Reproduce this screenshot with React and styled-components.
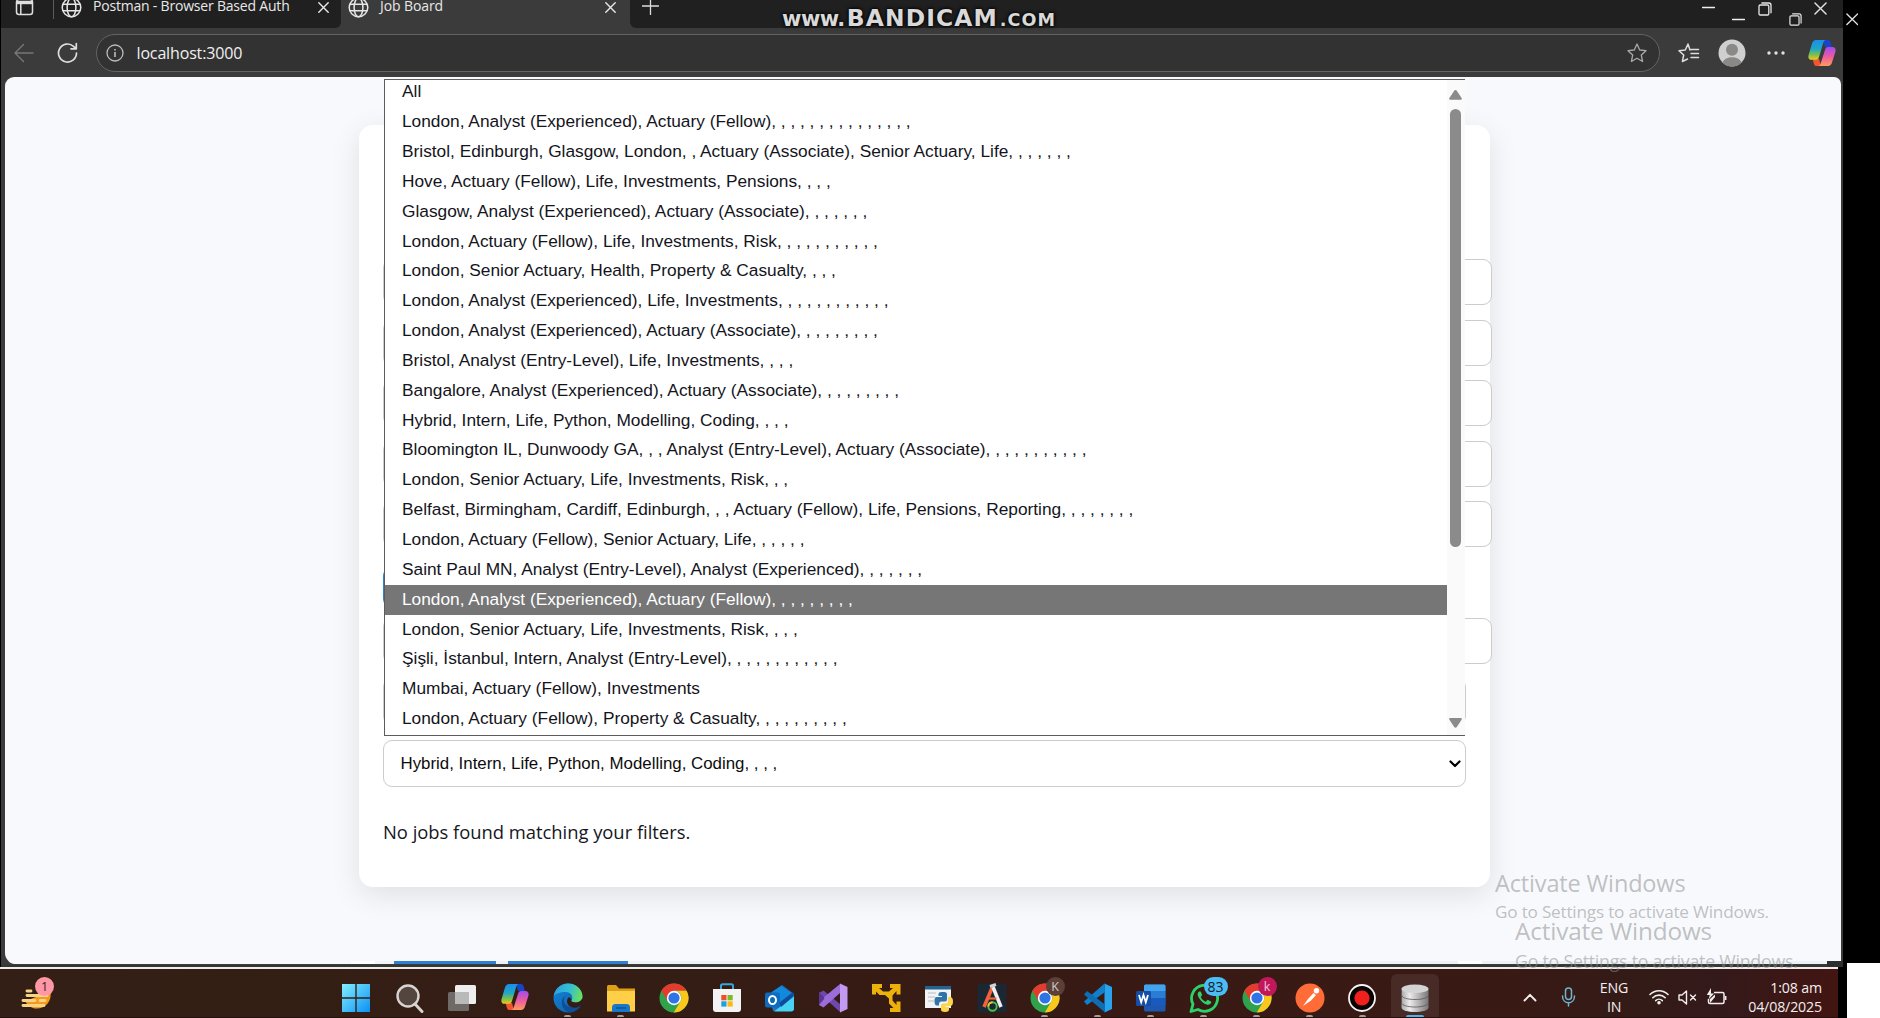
import React from "react";
import styled, { createGlobalStyle } from "styled-components";

const ui = `"Open Sans", "Noto Sans", sans-serif`;
const arial = `"Liberation Sans", Arial, sans-serif`;

const Global = createGlobalStyle`
  * { box-sizing: border-box; }
  body { margin: 0; background: #000; overflow: hidden; }
  svg { display: block; flex: none; }
`;

/* ---------- shell ---------- */
const Screen = styled.div`
  position: relative;
  width: 1880px;
  height: 1018px;
  background: #000;
  overflow: hidden;
  display: flex;
  flex-direction: column;
  font-family: ${ui};
`;
const Browser = styled.div`
  width: 1843px;
  height: 967px;
  border-left: 1px solid #000;
  background: #3b3b3b;
  display: flex;
  flex-direction: column;
`;
const TabStrip = styled.div`
  height: 28px;
  display: flex;
  background: #3b3b3b;
  color: #e8e8e8;
`;
const StripStart = styled.div`
  width: 340px;
  background: #202020;
  border-bottom-right-radius: 6px;
  display: flex;
  align-items: center;
  padding: 0 12px 13px 14px;
`;
const StripDivider = styled.div`
  width: 1px;
  height: 22px;
  margin: 0 7px 0 19px;
  background: #5c5c5c;
`;
const ActiveTab = styled.div`
  width: 289px;
  display: flex;
  align-items: center;
  padding: 0 14px 13px 7px;
`;
const TabTitle = styled.span`
  flex: 1;
  margin: -3px 0 0 11px;
  font-size: 14px;
  line-height: 18px;
  letter-spacing: ${(p) => p.$track || "0"};
  white-space: nowrap;
`;
const StripEnd = styled.div`
  flex: 1;
  background: #202020;
  border-bottom-left-radius: 6px;
  padding: 0 0 0 12px;
  display: flex;
`;
const Toolbar = styled.div`
  height: 49px;
  display: flex;
  align-items: center;
  padding: 1px 7px 0 13px;
  color: #d6d6d6;
`;
const AddressBar = styled.div`
  width: 1564px;
  height: 38px;
  margin: 0 0 0 18px;
  border: 1px solid #636363;
  border-radius: 19px;
  background: #323232;
  display: flex;
  align-items: center;
  padding: 0 12px 0 9px;
`;
const Url = styled.span`
  flex: 1;
  margin-left: 12.5px;
  margin-top: -1px;
  color: #f0f0f0;
  font-size: 16px;
  letter-spacing: -0.15px;
`;
const ToolGroup = styled.div`
  flex: 1;
  display: flex;
  align-items: center;
  padding: 0 0 0 18px;
`;

/* ---------- page ---------- */
const Viewport = styled.div`
  position: relative;
  width: 1836px;
  height: 887px;
  margin-left: 4px;
  border-radius: 9px 7px 0 11px;
  background: #f8f9fc;
  overflow: hidden;
  display: flex;
  flex-direction: column;
  justify-content: space-between;
`;
const Card = styled.div`
  width: 1131px;
  height: 762px;
  margin: 48px 0 0 354px;
  padding: 134px 24px 0;
  border-radius: 14px;
  background: #fff;
  box-shadow: 0 8px 30px rgba(0, 0, 0, 0.1);
`;
const Fields = styled.div`
  display: flex;
  flex-direction: column;
  gap: 14.6px;
`;
const Field = styled.div`
  width: 1109px;
  height: 46px;
  border: 1px solid #ccc;
  border-radius: 9px;
  background: #fff;
`;
const Submit = styled.div`
  width: 180px;
  height: 41px;
  margin: 5px 0 -5px;
  border-radius: 9px;
  background: #2b86c9;
`;
const Select = styled.div`
  position: relative;
  width: 1083px;
  height: 47px;
  border: 1px solid #ccc;
  border-radius: 9px;
  background: #fff;
  display: flex;
  align-items: center;
  justify-content: space-between;
  padding: 1px 4px 0 16.5px;
  color: #0c0c0c;
  font-family: ${arial};
  font-size: 16.87px;
`;
const Menu = styled.div`
  position: absolute;
  left: 0;
  bottom: calc(100% + 5px);
  width: 1080.5px;
  height: 657px;
  border: solid #5c5c5c;
  border-width: 1px 0 1px 1px;
  background: #fff;
  display: flex;
`;
const Options = styled.div`
  flex: 1;
  overflow: hidden;
  & > :first-child { margin-top: -2.4px; }
`;
const Option = styled.div`
  height: 29.857px;
  padding-left: 17px;
  line-height: 29.857px;
  font-size: 17.31px;
  white-space: pre;
  color: ${(p) => (p.$active ? "#fff" : "#14141c")};
  background: ${(p) => (p.$active ? "#767676" : "transparent")};
`;
const Scrollbar = styled.div`
  width: 18px;
  background: #fafafa;
  display: flex;
  flex-direction: column;
  justify-content: space-between;
  align-items: center;
  padding: 10px 0 7px;
`;
const Thumb = styled.div`
  width: 11px;
  height: 438px;
  margin: 9px 0 auto;
  border-radius: 6px;
  background: #8b8b8b;
`;
const Empty = styled.p`
  margin: 30px 0 0;
  font-size: 18.4px;
  line-height: 30px;
  letter-spacing: -0.02px;
  color: #16161e;
`;
const NextWindow = styled.div`
  height: 3px;
  padding-left: 346px;
  background: linear-gradient(90deg, #f8fafc 330px, #edf1f5 420px);
  display: flex;
`;
const Slice = styled.div`
  width: ${(p) => p.$w}px;
  margin-right: ${(p) => p.$gap}px;
  background: ${(p) => p.$c};
`;
const EdgeLine = styled.div`
  height: 2px;
  margin-top: auto;
  background: #343734;
`;
const PaleLine = styled.div`
  height: 2px;
  width: 1838px;
  background: #f1edeb;
`;

/* ---------- overlays ---------- */
const Floating = styled.div`
  position: absolute;
  left: ${(p) => p.$x}px;
  top: ${(p) => p.$y}px;
  white-space: nowrap;
`;
const WindowGlyph = styled(Floating)`
  color: #e2e2e2;
`;
const Watermark = styled.div`
  color: rgba(140, 142, 144, 0.55);
  line-height: ${(p) => p.$lh || 32}px;
  font-size: ${(p) => p.$size}px;
  letter-spacing: ${(p) => p.$track}px;
`;
const Bandicam = styled.div`
  display: flex;
  align-items: baseline;
  gap: 2px;
  font-family: "DejaVu Sans", sans-serif;
  font-weight: 700;
  color: #d9d9d9;
  line-height: 28px;
  text-shadow: 0 0 3px #000, 0 0 4px #000;
`;
const Mark = styled.span`
  font-size: ${(p) => p.$size}px;
  letter-spacing: ${(p) => p.$track}px;
`;

/* ---------- taskbar ---------- */
const Bottom = styled.div`
  height: 49px;
  display: flex;
`;
const Taskbar = styled.div`
  width: 1838px;
  display: flex;
  background: linear-gradient(90deg, #331f15 0, #341d14 700px, #381a15 1000px, #391914 1500px, #331b18 1650px, #34191a 1720px, #421512 1838px);
  color: #f3eeee;
  border-bottom: 1px solid #26100f;
`;
const Widgets = styled.div`
  width: 329.6px;
  padding: 7px 0 0 20px;
`;
const WidgetIcon = styled.div`
  position: relative;
  width: 34px;
`;
const Apps = styled.div`
  display: flex;
  padding-top: 5px;
`;
const AppCell = styled.div`
  width: 52.98px;
  display: flex;
  flex-direction: column;
  align-items: center;
  justify-content: space-between;
  padding-top: 9px;
`;
const Highlight = styled(AppCell)`
  width: 48px;
  margin-left: 2.5px;
  border-radius: 6px 6px 0 0;
  background: rgba(255, 255, 255, 0.08);
`;
const Indicator = styled.div`
  width: ${(p) => (p.$active ? 18 : 7)}px;
  height: 2px;
  border-radius: 2px 2px 0 0;
  background: ${(p) => (p.$active ? "#4cb4e8" : "#a89c98")};
`;
const Holder = styled.div`
  position: relative;
`;
const Badge = styled.span`
  position: absolute;
  right: ${(p) => p.$right ?? -5}px;
  top: ${(p) => p.$top ?? -6}px;
  min-width: 19px;
  height: 19px;
  padding: 0 ${(p) => (p.$wide ? 4 : 0)}px;
  border-radius: 10px;
  text-align: center;
  line-height: 19px;
  font-size: ${(p) => (p.$wide ? 14 : 12.5)}px;
  color: ${(p) => p.$fg || "#fff"};
  background: ${(p) => p.$bg};
`;
const Tray = styled.div`
  margin-left: auto;
  display: flex;
  align-items: center;
  padding: 8px 16px 0 0;
`;
const TrayText = styled.div`
  margin-top: -1px;
  width: ${(p) => p.$w}px;
  text-align: ${(p) => p.$align};
  font-size: 14.2px;
  line-height: 19px;
  letter-spacing: ${(p) => p.$track || 0}px;
`;
const TrayGap = styled.div`
  width: ${(p) => p.$w}px;
`;
const Blank = styled.div`
  position: absolute;
  left: 1847px;
  top: 963px;
  width: 33px;
  height: 55px;
  background: #fff;
`;
const Notch = styled.div`
  position: absolute;
  left: 1827px;
  top: 961px;
  width: 16px;
  height: 6px;
  background: #2c2f30;
`;

/* ---------- drawings ---------- */
const Line = ({ w, h, d, sw = 1.4, vb, color = "currentColor", ...r }) => (
  <svg width={w} height={h} viewBox={vb || `0 0 ${w} ${h}`} fill="none" stroke={color} strokeWidth={sw} strokeLinecap="round" strokeLinejoin="round" {...r}>
    <path d={d} />
  </svg>
);
const Globe = () => (
  <svg width="21" height="21" viewBox="0 0 21 21" fill="none" stroke="#e6e6e6" strokeWidth="1.5">
    <circle cx="10.5" cy="10.5" r="9.3" />
    <ellipse cx="10.5" cy="10.5" rx="4.4" ry="9.3" />
    <path d="M2 7.2h17M2 13.8h17" />
  </svg>
);
const TabsIcon = () => (
  <svg width="19" height="17" viewBox="0 0 19 17" fill="none" stroke="#dedede" strokeWidth="1.5">
    <rect x="1.5" y="0.5" width="16" height="15" rx="2.5" />
    <path d="M1.5 3.6h16" strokeWidth="3.2" />
    <path d="M5.8 4v11.5" />
  </svg>
);
const Cross = ({ s = 11, sw = 1.4 }) => <Line w={s} h={s} vb="0 0 11 11" sw={sw} d="M.8.8l9.4 9.4M10.2.8L.8 10.2" />;
const Restore = ({ s = 14 }) => (
  <svg width={s} height={s} viewBox="0 0 14 14" fill="none" stroke="#e6e6e6" strokeWidth="1.3">
    <rect x="1" y="3" width="9.8" height="10" rx="1.2" />
    <path d="M3.4 1h7.4a2.2 2.2 0 0 1 2.2 2.2v8" />
  </svg>
);
const Minus = () => <Line w={13} h={3} sw={1.5} d="M.5 1.5h12" color="#eee" />;

const CopilotIcon = ({ s = 28 }) => (
  <svg width={s} height={s} viewBox="0 0 28 28">
    <defs>
      <linearGradient id="cpA" x1="0" y1="0" x2="0" y2="1">
        <stop offset="0" stopColor="#1a8fe8" /><stop offset=".45" stopColor="#1fa7c8" /><stop offset=".75" stopColor="#7cc04a" /><stop offset="1" stopColor="#f1c81e" />
      </linearGradient>
      <linearGradient id="cpB" x1="0" y1="0" x2="0" y2="1">
        <stop offset="0" stopColor="#a14cf0" /><stop offset=".5" stopColor="#ec5aa0" /><stop offset="1" stopColor="#ff9a5c" />
      </linearGradient>
    </defs>
    <path d="M15 1h5c1.5 0 2.2 1 2.7 2.600L23.700 8H17z" fill="#1745c8" />
    <path d="M13 27H8.500c-1.500 0-2.200-1-2.700-2.600L4.600 20H11z" fill="#f0552e" />
    <path d="M8 1h10c-1.600.2-2.300 1.500-2.800 3L11 18c-.6 1.800-1.400 2.800-3 2.800H3.600C.7 20.800-.1 18.600.6 16L4 4.500C4.700 2.200 6 1 8 1z" fill="url(#cpA)" />
    <path d="M20 27H10c1.600-.2 2.300-1.500 2.800-3L17 11c.6-1.900 1.400-3 3-3h4.400c2.900 0 3.700 2.200 3 4.800L24 23.500c-.7 2.300-2 3.500-4 3.500z" fill="url(#cpB)" />
  </svg>
);
const Chrome = () => (
  <svg width="30" height="30" viewBox="0 0 30 30">
    <circle cx="15" cy="15" r="14.500" fill="#2fa24c" />
    <path d="M2.440 7.750A14.500 14.500 0 0 1 27.560 7.750H15L8.720 18.600z" fill="#e33b2e" />
    <path d="M27.560 7.750A14.500 14.500 0 0 1 14.800 29.500L21.300 18.600A7.200 7.200 0 0 0 15 7.750z" fill="#fbc71b" />
    <circle cx="15" cy="15" r="7.200" fill="#fff" />
    <circle cx="15" cy="15" r="5.600" fill="#2f74e6" />
  </svg>
);
const svg = (children, vb = "0 0 30 30") => <svg width="30" height="30" viewBox={vb}>{children}</svg>;

const Windows = svg(<>
  <defs><linearGradient id="wn" x1="0" y1="0" x2="1" y2="1"><stop offset="0" stopColor="#84efff" /><stop offset="1" stopColor="#0a90f5" /></linearGradient></defs>
  <path fill="url(#wn)" d="M1 1h13.300v13.300H1zM15.700 1H29v13.300H15.700zM1 15.700h13.300V29H1zM15.700 15.700H29V29H15.700z" />
</>);
const Search = svg(<>
  <circle cx="14" cy="13" r="10.500" fill="#54463f" stroke="#d8d4d2" strokeWidth="2.400" />
  <path d="M21 21l7 7.500" stroke="#d8d4d2" strokeWidth="3" strokeLinecap="round" />
</>);
const TaskView = svg(<>
  <rect x="1" y="9" width="21" height="19" rx="1.500" fill="#6f6a68" />
  <rect x="8" y="2" width="21" height="19" rx="1.500" fill="#eee" />
  <rect x="8" y="9" width="14" height="12" fill="#b9b9b9" />
</>);
const Edge = svg(<>
  <defs>
    <linearGradient id="egA" x1="0" y1=".3" x2="1" y2=".5"><stop offset="0" stopColor="#2a9fe0" /><stop offset=".55" stopColor="#35bfd0" /><stop offset="1" stopColor="#6be05a" /></linearGradient>
    <linearGradient id="egB" x1="0" y1="0" x2="1" y2="1"><stop offset="0" stopColor="#1685d8" /><stop offset="1" stopColor="#0c5ba8" /></linearGradient>
  </defs>
  <circle cx="15" cy="15" r="14.500" fill="url(#egB)" />
  <path d="M.7 13C2 5.500 8 .5 15 .5 23.500.5 29.500 7 29.500 13c0 4-3 6.500-6.800 6.500-3 0-5-1-4.200-2.400 2.200-3.300-.2-8.100-6-8.100C7 9 2.500 11 .7 13z" fill="url(#egA)" />
  <path d="M12.700 12.500c-3.700 3.700-2 11.500 6.500 11.800 3.300.1 6.300-1.300 8-2.700l.8.800c-2.300 4-6 6.400-10 7C9 29 5.500 17 12.700 12.500z" fill="#0e4f96" />
  <path d="M18.500 17.100c-1 1.500 1.300 2.500 4.200 2.400 2.500-.1 4.800-1.100 6-3l1.300-.5v6l-2.800.8c-2.500 2-6.500 2.500-9.500 1-4.200-2.100-4.700-7.300-2-9.600 1.600.2 3.100 1.500 2.800 2.900z" fill="#341d14" />
</>);
const Folder = svg(<>
  <path d="M1 3.500Q1 2 2.500 2H10l3 3.500H29V28H1z" fill="#dca018" />
  <path d="M1 8h28v20.500H1z" fill="#ffcf48" />
  <path d="M6 29v-4.500Q6 21 9.500 21h11q3.500 0 3.500 3.500V29z" fill="#1877c9" />
  <path d="M10 25h10" stroke="#0d559b" strokeWidth="1.600" />
</>);
const Store = svg(<>
  <path d="M9 7V3Q9 1.300 10.500 1.300h9Q21 1.300 21 3V7" fill="none" stroke="#35a9dc" strokeWidth="2" />
  <path d="M1 6h28V26q0 3-3 3H4q-3 0-3-3z" fill="#f3f3f3" />
  <path d="M9.300 12h5.200v5.300H9.300z" fill="#f04e23" /><path d="M15.500 12h5.200v5.300h-5.200z" fill="#7db928" />
  <path d="M9.300 18.300h5.200v5.300H9.300z" fill="#1da0e2" /><path d="M15.500 18.300h5.200v5.300h-5.200z" fill="#fdb813" />
</>);
const Outlook = svg(<>
  <path d="M4 11L17 2l12 9v14q0 3-3 3H8z" fill="#1c72c4" />
  <path d="M29 12v13.500q0 3-3 3H9L28 14z" fill="#46d3f4" />
  <path d="M7 9l9-6 13 9-12 10z" fill="#1189dc" /><path d="M28 9l1 4-13 11-2-4z" fill="#124b9c" />
  <rect y="9.500" width="15" height="15" rx="2" fill="#0d6cc0" />
  <ellipse cx="7.500" cy="17" rx="3.500" ry="4.100" fill="none" stroke="#fff" strokeWidth="2" />
</>);
const VS = svg(<>
  <path d="M1 10L5.500 7.500 22 21V29z" fill="#7047ad" />
  <path d="M1 9v13l4.500 2.500L22 10V1L5 15z" fill="#9c6bdc" />
  <path d="M1 9v13l5.500-6.500z" fill="#593692" />
  <path d="M22 .5l7.500 3.500v22L22 29.500z" fill="#c29af2" />
</>);
const Arrows = svg(
  <path fill="#edb10c" d="M1 1h10v4H8l4 3.500h6L22 5h-3V1h10.500v10.500h-4V8l-4 4.500v5L25.500 22v-3.500h4V29H19v-4h3.500L18 20.500v-5L14 12H8.500L5 8.500v3H1z" />
);
const Python = svg(<>
  <path d="M1 3h26v22H1z" fill="#f1f3f5" /><path d="M1 3h26v3.500H1z" fill="#24638e" />
  <path d="M4 10h8M4 14h7M4 18h6" stroke="#b7bdc3" strokeWidth="1.200" />
  <path d="M14.500 11q0-2 3-2h3q2.500 0 2.500 2.500v5q0 2-2 2h-4q-2 0-2 2.500v1.500h-2q-2.500 0-2.500-4.500t2.500-4h5v-1h-3.500z" fill="#3374a8" />
  <path d="M24 14h2q3 0 3 4.500t-3 4.500h-4.500v1H25v2.500q0 2.500-4 2.500t-4-2.500V22.500q0-2 2-2h3q2 0 2-2z" fill="#fdd549" />
</>);
const AppA = svg(<>
  <rect x=".5" y=".5" width="29" height="29" rx="2" fill="#1b2733" />
  <path d="M7 24L15 5" stroke="#f2633c" strokeWidth="3.600" /><path d="M16 4l8 20" stroke="#f0f0f0" strokeWidth="3.600" />
  <path d="M10.500 15.500h9" stroke="#f2633c" strokeWidth="2.200" /><path d="M13 3.500L19 1.500" stroke="#d5d5d5" strokeWidth="3" />
  <circle cx="15.500" cy="23.500" r="4.200" fill="#1b2733" stroke="#4bc24b" strokeWidth="1.900" />
  <path d="M11.300 23.500a4.200 4.200 0 0 1 4.200-4.200" stroke="#f5c22b" strokeWidth="1.900" fill="none" />
</>);
const Code = svg(<>
  <path d="M21.500.5L29 4v22l-7.500 3.500z" fill="#2aa3ee" />
  <path d="M21.500.5L1 18.500 4 22 22 9z" fill="#1180cc" />
  <path d="M1 11.500L4 8l18 13.500v8z" fill="#0c6eb5" />
</>);
const Word = svg(<>
  <rect x="8" y="1.500" width="21.500" height="27" rx="1.500" fill="#1d57b0" />
  <path d="M8 3q0-1.500 1.500-1.500H28q1.500 0 1.500 1.500v5H8z" fill="#42a3ef" />
  <path d="M8 8h21.500v7H8z" fill="#2b7cd3" /><path d="M8 15h21.500v7H8z" fill="#185abd" />
  <rect x="0" y="8" width="15" height="15" rx="1.500" fill="#174ea5" />
  <path d="M3 12l2.200 7.200L7.500 12l2.300 7.200L12 12" fill="none" stroke="#fff" strokeWidth="1.800" />
</>);
const WhatsApp = svg(<>
  <path d="M2 28.500l2-7.300A13 13 0 1 1 9 26.500z" fill="none" stroke="#2bd366" strokeWidth="2.800" strokeLinejoin="round" />
  <path d="M10 8.500c-2 1.500-1.500 4 0 6.500 2.300 3.800 5 6 8.500 6.800 2 .3 4-1.500 3.800-3l-3.600-2.100-2 2c-2.500-1-4-2.600-5-4.700l1.500-1.900-1.500-3.600z" fill="#2bd366" />
</>);
const Postman = svg(<>
  <circle cx="15" cy="15" r="14.500" fill="#ff6c37" />
  <circle cx="21.500" cy="7.800" r="2.700" fill="#fff" />
  <path d="M18.500 10l2.500 2-5 5.500L8 23l5-7z" fill="#fff" />
</>);
const Recorder = svg(<>
  <circle cx="15" cy="15" r="13" fill="#0a0303" stroke="#f3f3f3" strokeWidth="1.800" />
  <circle cx="15" cy="15" r="7.600" fill="#f2201d" />
</>);
const Database = svg(<>
  <defs><linearGradient id="db" x1="0" x2="1"><stop offset="0" stopColor="#a9a9a9" /><stop offset=".3" stopColor="#ececec" /><stop offset="1" stopColor="#777" /></linearGradient></defs>
  <path d="M1.500 20.500v4c0 6 27 6 27 0v-4z" fill="url(#db)" />
  <path d="M1.500 19.500c0 6 27 6 27 0v-6h-27z" fill="url(#db)" stroke="#5e5452" strokeWidth=".8" />
  <path d="M1.500 12c0 6 27 6 27 0V6h-27z" fill="url(#db)" stroke="#5e5452" strokeWidth=".8" />
  <ellipse cx="15" cy="5.800" rx="13.500" ry="4.300" fill="#d4d4d4" />
</>);

const apps = [
  { icon: Windows }, { icon: Search }, { icon: TaskView }, { icon: <CopilotIcon /> },
  { icon: Edge, on: true }, { icon: Folder, on: true }, { icon: <Chrome /> }, { icon: Store },
  { icon: Outlook }, { icon: VS }, { icon: Arrows }, { icon: Python }, { icon: AppA },
  { icon: <Chrome />, on: true, badge: "K", bg: "#5a4038", fg: "#d8c8c2" },
  { icon: Code, on: true }, { icon: Word, on: true },
  { icon: WhatsApp, on: true, badge: "83", bg: "#4cbcf5", fg: "#10202c", wide: true },
  { icon: <Chrome />, on: true, badge: "k", bg: "#c2185b", fg: "#f0c4d6" },
  { icon: Postman, on: true }, { icon: Recorder, on: true },
];

const tail = (n) => " ,".repeat(n);
const options = [
  "All",
  "London, Analyst (Experienced), Actuary (Fellow)," + tail(14),
  "Bristol, Edinburgh, Glasgow, London, , Actuary (Associate), Senior Actuary, Life," + tail(6),
  "Hove, Actuary (Fellow), Life, Investments, Pensions," + tail(3),
  "Glasgow, Analyst (Experienced), Actuary (Associate)," + tail(6),
  "London, Actuary (Fellow), Life, Investments, Risk," + tail(10),
  "London, Senior Actuary, Health, Property & Casualty," + tail(3),
  "London, Analyst (Experienced), Life, Investments," + tail(11),
  "London, Analyst (Experienced), Actuary (Associate)," + tail(8),
  "Bristol, Analyst (Entry-Level), Life, Investments," + tail(3),
  "Bangalore, Analyst (Experienced), Actuary (Associate)," + tail(8),
  "Hybrid, Intern, Life, Python, Modelling, Coding," + tail(3),
  "Bloomington IL, Dunwoody GA, , , Analyst (Entry-Level), Actuary (Associate)," + tail(10),
  "London, Senior Actuary, Life, Investments, Risk," + tail(2),
  "Belfast, Birmingham, Cardiff, Edinburgh, , , Actuary (Fellow), Life, Pensions, Reporting," + tail(7),
  "London, Actuary (Fellow), Senior Actuary, Life," + tail(5),
  "Saint Paul MN, Analyst (Entry-Level), Analyst (Experienced)," + tail(6),
  "London, Analyst (Experienced), Actuary (Fellow)," + tail(8),
  "London, Senior Actuary, Life, Investments, Risk," + tail(3),
  "Şişli, İstanbul, Intern, Analyst (Entry-Level)," + tail(11),
  "Mumbai, Actuary (Fellow), Investments",
  "London, Actuary (Fellow), Property & Casualty," + tail(9),
];

function Chromebar() {
  return (
    <>
      <TabStrip>
        <StripStart>
          <TabsIcon />
          <StripDivider />
          <Globe />
          <TabTitle $track="-0.2px">Postman - Browser Based Auth</TabTitle>
          <Cross />
        </StripStart>
        <ActiveTab>
          <Globe />
          <TabTitle $track="-0.1px">Job Board</TabTitle>
          <Cross />
        </ActiveTab>
        <StripEnd><Line w={17} h={15} d="M.5 6h16M8.500 0v14.500" sw={1.3} color="#ddd" /></StripEnd>
      </TabStrip>
      <Toolbar>
        <Line w={20} h={20} d="M19 10H1.500M9.500 1.500L1 10l8.500 8.500" color="#777" />
        <TrayGap $w={23} />
        <Line w={21} h={22} sw={1.7} d="M19.500 11a9 9 0 1 1-3-6.700L19 6.500M19.300 1.500v5.300h-5.300" color="#dedede" />
        <AddressBar>
          <svg width="18" height="18" viewBox="0 0 18 18" fill="none" stroke="#bcbcbc" strokeWidth="1.3"><circle cx="9" cy="9" r="8" /><path d="M9 8v5M9 5v1.500" strokeWidth="1.6" /></svg>
          <Url>localhost:3000</Url>
          <Line w={20} h={20} sw={1.3} color="#a9a9a9" d="M10 1l2.700 6 6.300.7-4.700 4.300 1.300 6.500L10 15.300l-5.600 3.200L5.700 12 1 7.700 7.300 7z" />
        </AddressBar>
        <ToolGroup>
          <Line w={22} h={20} sw={1.5} color="#dedede" d="M12 7L10 1 7.300 7 1 7.700 5.700 12l-1.300 6.500L9.500 16M13 6.500h7.500M13 10.500h7.500M13 14.500h7.500" />
          <TrayGap $w={18} />
          <svg width="28" height="28" viewBox="0 0 28 28"><circle cx="14" cy="14" r="13.5" fill="#cfcfcf" /><circle cx="14" cy="10.800" r="6" fill="#8b8987" /><path d="M4.500 23.500c3-7 16-7 19 0a13.500 13.500 0 0 1-19 0z" fill="#8b8987" /></svg>
          <TrayGap $w={20.5} />
          <svg width="18" height="4" viewBox="0 0 18 4" fill="#e0e0e0"><circle cx="2" cy="2" r="1.700" /><circle cx="9" cy="2" r="1.700" /><circle cx="16" cy="2" r="1.700" /></svg>
          <TrayGap $w={23} />
          <CopilotIcon s={28} />
        </ToolGroup>
      </Toolbar>
    </>
  );
}

function JobBoard() {
  return (
    <Viewport>
      <Card>
        <Fields>
          <Field /><Field /><Field /><Field /><Field />
          <Submit />
          <Field />
          <Select />
          <Select>
            <span>{options[11]}</span>
            <Line w={12} h={8} sw={2.2} d="M1.500 1.500L6 6l4.500-4.500" color="#000" />
            <Menu>
              <Options>
                {options.map((o, i) => <Option key={i} $active={i === 17}>{o}</Option>)}
              </Options>
              <Scrollbar>
                <svg width="13" height="10" viewBox="0 0 13 10" fill="#8b8b8b"><path d="M6.500 0q.8 0 1.300.8L12.600 8q.7 1.700-.8 1.700H1.200Q-.3 9.700.4 8L5.200.8Q5.700 0 6.500 0z" /></svg>
                <Thumb />
                <svg width="13" height="10" viewBox="0 0 13 10" fill="#8b8b8b"><path d="M6.500 9.700q.8 0 1.300-.8l4.800-7.200Q13.300 0 11.800 0H1.200Q-.3 0 .4 1.700L5.200 8.900q.5.800 1.300.8z" /></svg>
              </Scrollbar>
            </Menu>
          </Select>
        </Fields>
        <Empty>No jobs found matching your filters.</Empty>
      </Card>
      <NextWindow>
        <Slice $w={24} $gap={19} $c="#fff" />
        <Slice $w={102} $gap={12} $c="#2f80d0" />
        <Slice $w={120} $gap={830} $c="#2f80d0" />
        <Slice $w={24} $gap={0} $c="#fff" />
      </NextWindow>
    </Viewport>
  );
}

function SystemBar() {
  return (
    <Bottom>
      <Taskbar>
        <Widgets>
          <WidgetIcon>
            <svg width="34" height="36" viewBox="0 0 34 36">
              <path d="M5 25a13.500 13.500 0 0 0 25-10l-6 3z" fill="#f59a1c" />
              <path d="M7 15h4M7 19.500h20M3 24.500h12M20 24.500h5M3 29.500h21" stroke="#f5d488" strokeWidth="2.900" strokeLinecap="round" />
            </svg>
            <Badge $bg="#ff97a6" $fg="#3a1a1e" $right={0} $top={1}>1</Badge>
          </WidgetIcon>
        </Widgets>
        <Apps>
          {apps.map((a, i) => (
            <AppCell key={i}>
              <Holder>
                {a.icon}
                {a.badge && <Badge $bg={a.bg} $fg={a.fg} $wide={a.wide} $right={a.wide ? -9 : -5}>{a.badge}</Badge>}
              </Holder>
              {a.on && <Indicator />}
            </AppCell>
          ))}
          <Highlight>{Database}<Indicator $active /></Highlight>
        </Apps>
        <Tray>
          <Line w={14} h={9} sw={1.9} d="M1.500 7.500L7 1.800l5.500 5.700" />
          <TrayGap $w={24} />
          <svg width="15" height="20" viewBox="0 0 15 20" fill="none" stroke="#6fb4d0" strokeWidth="1.500" strokeLinecap="round"><rect x="4.500" y="1" width="6" height="11.500" rx="3" /><path d="M1.500 9c0 9 12 9 12 0M7.500 16v3" /></svg>
          <TrayGap $w={17} />
          <TrayText $w={42} $align="center" $track={-0.2}>ENG<br />IN</TrayText>
          <TrayGap $w={14} />
          <svg width="20" height="16" viewBox="0 0 20 16" fill="none" stroke="currentColor" strokeWidth="1.600" strokeLinecap="round"><path d="M1 5.500c5-5 13-5 18 0M3.800 8.700c3.500-3.500 8.900-3.500 12.400 0M6.700 11.600c1.900-1.900 4.700-1.900 6.600 0" /><circle cx="10" cy="13.800" r="1" fill="currentColor" /></svg>
          <TrayGap $w={9} />
          <Line w={19} h={15} sw={1.4} d="M1 5v5h3l4.500 4V1L4 5zM12.500 5l5 5M17.500 5l-5 5" />
          <TrayGap $w={9} />
          <svg width="21" height="18" viewBox="0 0 21 18" fill="none" stroke="currentColor" strokeWidth="1.500"><path d="M8 4.500h8.500q1.500 0 1.500 1.500v8q0 1.500-1.500 1.500H4q-1.500 0-1.500-1.500v-3M19.700 8v4" /><path d="M5 0L.8 7h3L2.500 11.500 8 5.500H5z" fill="currentColor" stroke="none" /><path d="M4 15V11l5-4.500V9z" fill="currentColor" stroke="none" /></svg>
          <TrayText $w={95} $align="right" $track={-0.15}>1:08 am<br />04/08/2025</TrayText>
        </Tray>
      </Taskbar>
    </Bottom>
  );
}

export default function App() {
  return (
    <Screen>
      <Global />
      <Browser>
        <Chromebar />
        <JobBoard />
        <EdgeLine />
      </Browser>
      <PaleLine />
      <SystemBar />
      <Blank />
      <Notch />

      <Floating $x={782} $y={4}>
        <Bandicam>
          <Mark $size={21} $track={-0.5}>www.</Mark>
          <Mark $size={23.4} $track={1.1}>BANDICAM</Mark>
          <Mark $size={17.6} $track={1}>.COM</Mark>
        </Bandicam>
      </Floating>

      <WindowGlyph $x={1702} $y={6}><Minus /></WindowGlyph>
      <WindowGlyph $x={1757.5} $y={1.5}><Restore /></WindowGlyph>
      <WindowGlyph $x={1813.5} $y={1.5}><Cross s={13} sw={1.2} /></WindowGlyph>
      <WindowGlyph $x={1732} $y={18}><Minus /></WindowGlyph>
      <WindowGlyph $x={1788.5} $y={12.5}><Restore s={13} /></WindowGlyph>
      <WindowGlyph $x={1845.5} $y={13}><Cross s={12.5} sw={1.2} /></WindowGlyph>

      <Floating $x={1495} $y={867}><Watermark $size={23.5} $track={-0.15}>Activate Windows</Watermark></Floating>
      <Floating $x={1495} $y={900}><Watermark $lh={24} $size={17.2} $track={-0.22}>Go to Settings to activate Windows.</Watermark></Floating>
      <Floating $x={1515} $y={915}><Watermark $size={24.3} $track={-0.15}>Activate Windows</Watermark></Floating>
      <Floating $x={1515} $y={948.5}><Watermark $lh={24} $size={17.8} $track={-0.25}>Go to Settings to activate Windows.</Watermark></Floating>
    </Screen>
  );
}
